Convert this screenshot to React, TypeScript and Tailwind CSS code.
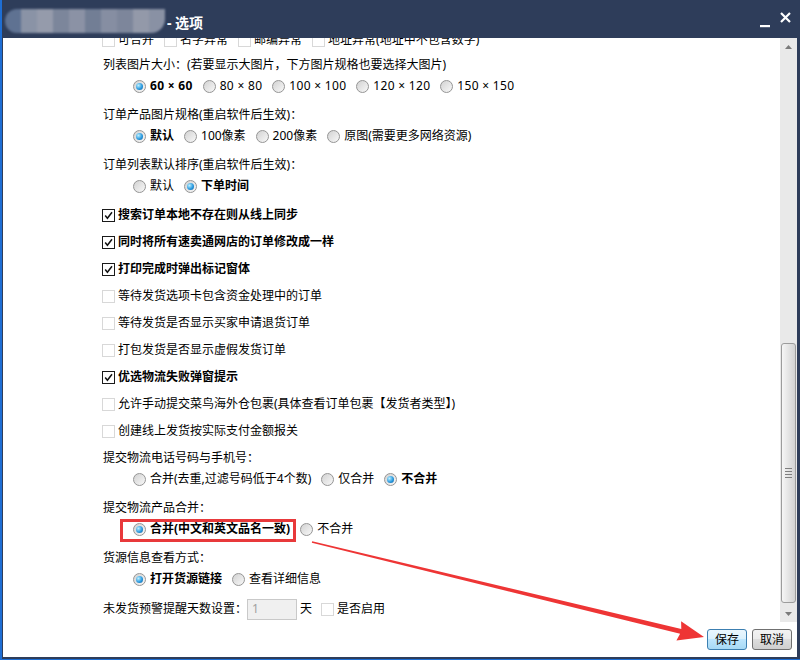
import React from 'react';

interface OptProps {
  label: string;
  checked?: boolean;
  wide?: boolean;
}

// 单选按钮（Win7 风格）
const Radio: React.FC<{ checked?: boolean }> = ({ checked }) => (
  <span className="flex h-[13px] w-[13px] shrink-0 items-center justify-center rounded-full border border-[#959595] bg-[linear-gradient(135deg,#d2d2d2,#f8f8f8)]">
    {checked && (
      <span className="h-[7px] w-[7px] rounded-full bg-[radial-gradient(circle_at_35%_35%,#bdf0ff,#2c9be0_55%,#0a5a9c)]" />
    )}
  </span>
);

// 复选框
const Check: React.FC<{ checked?: boolean }> = ({ checked }) =>
  checked ? (
    <span className="flex h-[13px] w-[13px] shrink-0 items-center justify-center border border-[#1a1a1a] bg-white">
      <svg width="9" height="9" viewBox="0 0 9 9">
        <path d="M1.2 4.6 L3.4 7.2 L8 1.2" fill="none" stroke="#111" strokeWidth="1.5" />
      </svg>
    </span>
  ) : (
    <span className="block h-[13px] w-[13px] shrink-0 border border-[#d8d8d8] bg-white" />
  );

const Opt: React.FC<OptProps> = ({ label, checked, wide }) => (
  <span className="flex items-center">
    <Radio checked={checked} />
    <span className={`ml-[4px] ${checked ? 'font-bold' : ''} ${wide ? 'tracking-[0.3px]' : ''}`}>{label}</span>
  </span>
);

const CheckRow: React.FC<OptProps> = ({ label, checked }) => (
  <div className="mt-[7px] flex h-5 items-center">
    <Check checked={checked} />
    <span className={`ml-[3px] ${checked ? 'font-bold' : ''}`}>{label}</span>
  </div>
);

const Group: React.FC<{ title: string; first?: boolean; children: React.ReactNode }> = ({ title, first, children }) => (
  <div className={`${first ? 'mt-[5px]' : 'mt-[7px]'} pb-[2px]`}>
    <div className="flex h-5 items-center pl-px">{title}</div>
    <div className="mt-px flex h-5 items-center gap-[10px] pl-[31px]">{children}</div>
  </div>
);

const blurBlocks = ['#5f7292', '#8a93a6', '#959bab', '#7c869b', '#8b92a5', '#727e95', '#868ea2', '#7d869b', '#9399a9', '#8991a4'];

export default function App() {
  return (
    <div className="relative flex h-[660px] w-[800px] flex-col border-b border-l-2 border-[#1e6ed4] bg-[#2e3d5a] text-[12px] text-black font-['Noto_Sans','Noto_Sans_CJK_SC',sans-serif]">
      {/* 标题栏 */}
      <div className="flex h-[38px] shrink-0 items-center">
        <div className="ml-[3px] mt-[4px] flex h-[24px] w-[160px] overflow-hidden rounded-l-[12px] rounded-br-[14px] blur-[1px]">
          {blurBlocks.map((c, i) => (
            <div key={i} className="h-full w-[16px]" style={{ backgroundColor: c }} />
          ))}
        </div>
        <span className="ml-[2px] mt-[6px] text-[14px] font-bold text-white">- 选项</span>
        <div className="ml-auto mr-[9px] flex items-center gap-[10px]">
          <svg width="10" height="10" viewBox="0 0 10 10" className="mt-[8px]">
            <rect x="0" y="7" width="10" height="2.2" fill="#fff" />
          </svg>
          <svg width="11" height="11" viewBox="0 0 11 11" className="-mt-[4px]">
            <path d="M1 1 L10 10 M10 1 L1 10" stroke="#fff" strokeWidth="2.2" />
          </svg>
        </div>
      </div>

      {/* 内容区 */}
      <div className="mb-[2px] ml-px mr-[3px] flex flex-1 flex-col bg-white">
        <div className="flex h-[584px]">
          <div className="flex-1 overflow-hidden pl-[99px]">
            <div className="-mt-[8px] flex h-5 items-center gap-[10px]">
              {['可合并', '名字异常', '邮编异常', '地址异常(地址中不包含数字)'].map((t) => (
                <span key={t} className="flex items-center">
                  <Check />
                  <span className="ml-[3px]">{t}</span>
                </span>
              ))}
            </div>

            <Group title="列表图片大小：(若要显示大图片，下方图片规格也要选择大图片)" first>
              <Opt label="60 × 60" checked wide />
              <Opt label="80 × 80" wide />
              <Opt label="100 × 100" wide />
              <Opt label="120 × 120" wide />
              <Opt label="150 × 150" wide />
            </Group>

            <Group title="订单产品图片规格(重启软件后生效)：">
              <Opt label="默认" checked />
              <Opt label="100像素" />
              <Opt label="200像素" />
              <Opt label="原图(需要更多网络资源)" />
            </Group>

            <Group title="订单列表默认排序(重启软件后生效)：">
              <Opt label="默认" />
              <Opt label="下单时间" checked />
            </Group>

            <CheckRow label="搜索订单本地不存在则从线上同步" checked />
            <CheckRow label="同时将所有速卖通网店的订单修改成一样" checked />
            <CheckRow label="打印完成时弹出标记窗体" checked />
            <CheckRow label="等待发货选项卡包含资金处理中的订单" />
            <CheckRow label="等待发货是否显示买家申请退货订单" />
            <CheckRow label="打包发货是否显示虚假发货订单" />
            <CheckRow label="优选物流失败弹窗提示" checked />
            <CheckRow label="允许手动提交菜鸟海外仓包裹(具体查看订单包裹【发货者类型】)" />
            <CheckRow label="创建线上发货按实际支付金额报关" />

            <Group title="提交物流电话号码与手机号：">
              <Opt label="合并(去重,过滤号码低于4个数)" />
              <Opt label="仅合并" />
              <Opt label="不合并" checked />
            </Group>

            <Group title="提交物流产品合并：">
              <span className="relative flex items-center">
                <Opt label="合并(中文和英文品名一致)" checked />
                <span className="absolute -bottom-[4px] -left-[13px] -right-[6px] -top-[1px] border-[3px] border-[#e8393b]" />
              </span>
              <Opt label="不合并" />
            </Group>

            <Group title="货源信息查看方式：">
              <Opt label="打开货源链接" checked />
              <Opt label="查看详细信息" />
            </Group>

            <div className="mt-[8px] flex h-5 items-center pl-px">
              <span>未发货预警提醒天数设置：</span>
              <span className="flex h-[21px] w-[50px] items-center border border-[#c9c9c9] bg-[#f0f0f0] pl-[4px] text-[#a0a0a0]">1</span>
              <span className="ml-[3px]">天</span>
              <span className="ml-[9px] flex items-center">
                <Check />
              </span>
              <span className="ml-[3px]">是否启用</span>
            </div>
          </div>

          {/* 滚动条 */}
          <div className="flex w-[17px] flex-col items-center bg-[#e9e9e9]">
            <div className="flex h-[17px] w-full items-center justify-center">
              <svg width="7" height="4" viewBox="0 0 7 4">
                <polygon points="3.5,0 7,4 0,4" fill="#7a7a7a" />
              </svg>
            </div>
            <div className="h-[288px]" />
            <div className="flex h-[260px] w-[15px] flex-col items-center justify-center gap-[2px] rounded-[3px] border border-[#9c9c9c] bg-[linear-gradient(90deg,#f6f6f6,#e4e4e4_50%,#d2d2d2)]">
              {[0, 1, 2, 3].map((i) => (
                <span key={i} className="h-px w-[7px] bg-[#7f7f7f]" />
              ))}
            </div>
            <div className="h-[2px]" />
            <div className="flex h-[17px] w-full items-center justify-center">
              <svg width="7" height="4" viewBox="0 0 7 4">
                <polygon points="0,0 7,0 3.5,4" fill="#7a7a7a" />
              </svg>
            </div>
          </div>
        </div>

        {/* 底部按钮 */}
        <div className="flex flex-1 items-start justify-end gap-[5px] pr-[5px] pt-[7px]">
          <button className="h-[21px] w-[40px] rounded-[3px] border border-[#3c7fb1] bg-[linear-gradient(#eaf6fd,#d9f0fc_50%,#bee6fd_50%,#a7d9f5)] text-[12px] leading-none">
            保存
          </button>
          <button className="h-[21px] w-[40px] rounded-[3px] border border-[#707070] bg-[linear-gradient(#f2f2f2,#ebebeb_50%,#dddddd_50%,#cfcfcf)] text-[12px] leading-none">
            取消
          </button>
        </div>
      </div>

      {/* 红色箭头标注 */}
      <svg className="pointer-events-none absolute left-[-2px] top-0" width="800" height="660" viewBox="0 0 800 660">
        <polygon
          points="312.2,541.3 681.3,628.9 681.1,621.2 704,637 676.4,640.6 680.1,633.8 311.8,542.7"
          fill="#ee3535"
        />
      </svg>
    </div>
  );
}
